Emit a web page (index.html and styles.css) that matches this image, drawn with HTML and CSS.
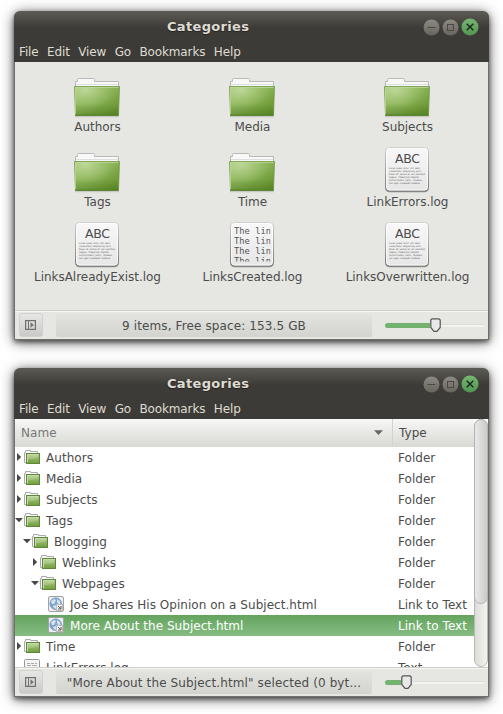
FILE: index.html
```html
<!DOCTYPE html>
<html lang="en">
<head>
<meta charset="utf-8">
<title>Categories</title>
<link rel="stylesheet" href="styles.css">
</head>
<body>
<svg class="defs" width="0" height="0" aria-hidden="true">
  <defs>
    <linearGradient id="green" x1="0" y1="0" x2="1" y2="1"><stop offset="0" stop-color="#a3c76e"/><stop offset=".5" stop-color="#88b155"/><stop offset=".75" stop-color="#749f3c"/><stop offset="1" stop-color="#618c2c"/></linearGradient>
    <radialGradient id="shine" cx=".25" cy=".12" r=".65"><stop offset="0" stop-color="#c9dfa9" stop-opacity=".75"/><stop offset="1" stop-color="#b5d18c" stop-opacity="0"/></radialGradient>
    <linearGradient id="shade" x1="0" y1="0" x2="0" y2="1"><stop offset=".6" stop-color="#3f6a15" stop-opacity="0"/><stop offset="1" stop-color="#3f6a15" stop-opacity=".35"/></linearGradient>
    <linearGradient id="mini" x1="0" y1="0" x2="0" y2="1"><stop offset="0" stop-color="#b2cf8d"/><stop offset="1" stop-color="#709c3c"/></linearGradient>
    <linearGradient id="paper" x1="0" y1="0" x2="0" y2="1"><stop offset="0" stop-color="#f8f8f8"/><stop offset="1" stop-color="#e6e6e6"/></linearGradient>
    <linearGradient id="edge" x1="0" y1="0" x2="0" y2="1"><stop offset="0" stop-color="#cfcfcf"/><stop offset="1" stop-color="#777"/></linearGradient>
    <linearGradient id="grey" x1="0" y1="0" x2="0" y2="1"><stop offset="0" stop-color="#8c8a83"/><stop offset="1" stop-color="#66645d"/></linearGradient>
    <linearGradient id="closeg" x1="0" y1="0" x2="0" y2="1"><stop offset="0" stop-color="#78b573"/><stop offset="1" stop-color="#4f9650"/></linearGradient>
    <clipPath id="clip"><rect x="3" y="3" width="39.500" height="38.500"/></clipPath>
    <symbol id="folder" viewBox="0 0 48 48">
      <path d="M2 46.500h44" stroke="#000" stroke-opacity=".13" stroke-width="1.500"/>
      <path d="M2.500 18V11.500H4.500V9.500Q4.500 8.500 5.500 8.500H20.500Q21.500 8.500 21.500 9.500V11.500H45.500V18" fill="#f8f8f8" stroke="#b9b9b9"/>
      <path d="M3 14.500H45" stroke="#dedede"/>
      <path d="M1.500 16.500H46.500L45.500 45.300H2.500Z" fill="url(#green)"/>
      <path d="M1.500 16.500H46.500L45.500 45.300H2.500Z" fill="url(#shine)"/>
      <path d="M1.500 16.500H46.500L45.500 45.300H2.500Z" fill="url(#shade)" stroke="#6f9843" stroke-width=".8"/>
      <path d="M2.500 44V17.500H45.500" fill="none" stroke="#c2daa0" stroke-opacity=".7"/>
      <path d="M2.300 45.200H45.700" stroke="#4d7a20"/>
    </symbol>
    <symbol id="sheet" viewBox="0 0 48 48">
      <rect x="2" y="3.300" width="44" height="44" rx="4.500" fill="#555" opacity=".6"/>
      <rect x="2.500" y="2.500" width="43" height="43.500" rx="4" fill="url(#paper)" stroke="url(#edge)"/>
      <rect x="3.500" y="3.500" width="41" height="41.500" rx="3" fill="none" stroke="#fff" stroke-opacity=".7"/>
    </symbol>
    <symbol id="abc" viewBox="0 0 48 48">
      <use href="#sheet"/>
      <text x="12" y="17.800" class="abc" textLength="25">ABC</text>
      <g class="lorem">
        <text x="6" y="24" textLength="32">Lorem ipsum dolor sit amet,</text>
        <text x="6" y="27" textLength="33">consectetur adipiscing elit.</text>
        <text x="6" y="30" textLength="36">Donec at varius et vel eleifend</text>
        <text x="6" y="33" textLength="30">tempus. Phasellus blandit</text>
        <text x="6" y="36" textLength="34">sollicitudin justo. Vivamus,</text>
        <text x="6" y="39" textLength="32">non eget consequat sodales.</text>
      </g>
    </symbol>
    <symbol id="lines" viewBox="0 0 48 48">
      <use href="#sheet"/>
      <g class="mono" clip-path="url(#clip)">
        <text x="6" y="14">The link</text><text x="6" y="24">The link</text><text x="6" y="34">The link</text><text x="6" y="44">The link</text>
      </g>
    </symbol>
    <symbol id="dir" viewBox="0 0 16 16">
      <path d="M.5 13.500V3.500H1.500V1.500H6.500V2.500H13.500V5" fill="#fafafa" stroke="#aaa"/>
      <path d="M.5 13.500H3" stroke="#aaa"/>
      <rect x="2.500" y="4.500" width="13" height="10" fill="url(#mini)" stroke="#5f873a"/>
      <path d="M3.500 13.500V5.500H14.500" fill="none" stroke="#c5dba8"/>
      <path d="M4 6H14V8Q10 10.500 4 10Z" fill="#fff" opacity=".18"/>
    </symbol>
    <symbol id="web" viewBox="0 0 16 16">
      <rect x=".5" y=".5" width="15" height="15" rx="1.500" fill="#efefef" stroke="#a3a3a3"/>
      <circle cx="7.700" cy="7.700" r="5.800" fill="#7fa6cf" stroke="#6a92bd" stroke-width=".8"/>
      <path d="M3 5L6 3L8 4L6 8L4 8ZM9 3L12 5L12.500 9L10 8L9 6ZM5 10L8 9L8 13L6 12Z" fill="#d5e3f1"/>
      <rect x="8.500" y="8.500" width="6" height="6" fill="#f5f5f5" stroke="#bbb"/>
      <path d="M10 10L12.500 12.500M13 10V13H10" fill="none" stroke="#555"/>
    </symbol>
    <symbol id="doc" viewBox="0 0 16 16">
      <rect x=".5" y=".5" width="15" height="15" rx="1" fill="#f4f4f4" stroke="#999"/>
      <path d="M3 4.500H6M7 4.500H10M11 4.500H13M3 6.500H7M8 6.500H13M3 8.500H12" stroke="#aaa"/>
    </symbol>
    <symbol id="right" viewBox="0 0 8 8"><path d="M2 0L6.200 4L2 8Z" fill="#484848"/></symbol>
    <symbol id="down" viewBox="0 0 8 8"><path d="M0 2H8L4 6.200Z" fill="#484848"/></symbol>
    <symbol id="controls" viewBox="0 0 56 18">
      <circle cx="8.500" cy="9.500" r="8" fill="url(#grey)"/><path d="M4.700 9.500H12.300" stroke="#494842"/>
      <circle cx="27.500" cy="9.500" r="8" fill="url(#grey)"/><rect x="24.500" y="6.500" width="6" height="6" fill="none" stroke="#494842"/>
      <circle cx="47" cy="9" r="8.500" fill="url(#closeg)"/><path d="M43.700 5.700L50.300 12.300M50.300 5.700L43.700 12.300" stroke="#18251a" stroke-width="1.400"/>
    </symbol>
    <symbol id="pane" viewBox="0 0 11 10">
      <rect x=".6" y=".6" width="9.800" height="8.800" fill="none" stroke="#707070" stroke-width="1.200"/>
      <path d="M3.500 1V9" stroke="#707070"/><path d="M5.500 2.300L8.800 5L5.500 7.700Z" fill="#707070"/>
    </symbol>
    <symbol id="knob" viewBox="0 0 11 15"><path d="M2 .8H9L10.200 2V9.500L7 13.300H4L.8 9.500V2Z" fill="#e9e9ea" stroke="#555" stroke-width="1.200"/></symbol>
  </defs>
</svg>

<main class="desktop">
  <section class="window icons-window">
    <header class="chrome">
      <div class="titlebar"><h1>Categories</h1><svg class="controls"><use href="#controls"/></svg></div>
      <nav class="menu"><span>File</span><span>Edit</span><span>View</span><span>Go</span><span>Bookmarks</span><span>Help</span></nav>
    </header>
    <div class="icon-view">
      <figure><svg><use href="#folder"/></svg><figcaption>Authors</figcaption></figure>
      <figure><svg><use href="#folder"/></svg><figcaption>Media</figcaption></figure>
      <figure><svg><use href="#folder"/></svg><figcaption>Subjects</figcaption></figure>
      <figure><svg><use href="#folder"/></svg><figcaption>Tags</figcaption></figure>
      <figure><svg><use href="#folder"/></svg><figcaption>Time</figcaption></figure>
      <figure><svg><use href="#abc"/></svg><figcaption>LinkErrors.log</figcaption></figure>
      <figure><svg><use href="#abc"/></svg><figcaption>LinksAlreadyExist.log</figcaption></figure>
      <figure><svg><use href="#lines"/></svg><figcaption>LinksCreated.log</figcaption></figure>
      <figure><svg><use href="#abc"/></svg><figcaption>LinksOverwritten.log</figcaption></figure>
    </div>
    <footer class="statusbar">
      <button class="toggle" aria-label="Sidebar"><svg><use href="#pane"/></svg></button>
      <div class="status">9 items, Free space: 153.5 GB</div>
      <div class="slider"><div class="fill fill-half"></div><svg class="knob"><use href="#knob"/></svg><div class="rest"></div></div>
    </footer>
  </section>

  <section class="window">
    <header class="chrome">
      <div class="titlebar"><h1>Categories</h1><svg class="controls"><use href="#controls"/></svg></div>
      <nav class="menu"><span>File</span><span>Edit</span><span>View</span><span>Go</span><span>Bookmarks</span><span>Help</span></nav>
    </header>
    <div class="list-view">
      <div class="list">
        <div class="row head"><div class="name">Name<svg class="sort"><use href="#down"/></svg></div><div class="type">Type</div></div>
        <div class="row"><div class="name"><svg class="arrow"><use href="#right"/></svg><svg class="ico"><use href="#dir"/></svg>Authors</div><div class="type">Folder</div></div>
        <div class="row"><div class="name"><svg class="arrow"><use href="#right"/></svg><svg class="ico"><use href="#dir"/></svg>Media</div><div class="type">Folder</div></div>
        <div class="row"><div class="name"><svg class="arrow"><use href="#right"/></svg><svg class="ico"><use href="#dir"/></svg>Subjects</div><div class="type">Folder</div></div>
        <div class="row"><div class="name"><svg class="arrow"><use href="#down"/></svg><svg class="ico"><use href="#dir"/></svg>Tags</div><div class="type">Folder</div></div>
        <div class="row level-1"><div class="name"><svg class="arrow"><use href="#down"/></svg><svg class="ico"><use href="#dir"/></svg>Blogging</div><div class="type">Folder</div></div>
        <div class="row level-2"><div class="name"><svg class="arrow"><use href="#right"/></svg><svg class="ico"><use href="#dir"/></svg>Weblinks</div><div class="type">Folder</div></div>
        <div class="row level-2"><div class="name"><svg class="arrow"><use href="#down"/></svg><svg class="ico"><use href="#dir"/></svg>Webpages</div><div class="type">Folder</div></div>
        <div class="row level-3"><div class="name"><svg class="arrow"></svg><svg class="ico"><use href="#web"/></svg>Joe Shares His Opinion on a Subject.html</div><div class="type">Link to Text</div></div>
        <div class="row level-3 selected"><div class="name"><svg class="arrow"></svg><svg class="ico"><use href="#web"/></svg>More About the Subject.html</div><div class="type">Link to Text</div></div>
        <div class="row"><div class="name"><svg class="arrow"><use href="#right"/></svg><svg class="ico"><use href="#dir"/></svg>Time</div><div class="type">Folder</div></div>
        <div class="row"><div class="name"><svg class="arrow"></svg><svg class="ico"><use href="#doc"/></svg>LinkErrors.log</div><div class="type">Text</div></div>
      </div>
      <div class="scrollbar"><div class="thumb"></div></div>
    </div>
    <footer class="statusbar">
      <button class="toggle" aria-label="Sidebar"><svg><use href="#pane"/></svg></button>
      <div class="status">"More About the Subject.html" selected (0 byt...</div>
      <div class="slider"><div class="fill fill-low"></div><svg class="knob"><use href="#knob"/></svg><div class="rest"></div></div>
    </footer>
  </section>
</main>
</body>
</html>
```
FILE: styles.css
```css
* { box-sizing: border-box; }
body {
  margin: 0;
  width: 503px;
  height: 714px;
  overflow: hidden;
  background: #fff;
  color: #4c4c4c;
  font: 12px/15px "DejaVu Sans", sans-serif;
  white-space: nowrap;
}
svg { display: block; flex: none; }
.defs { position: absolute; }
.desktop {
  display: flex;
  flex-direction: column;
  gap: 28px;
  padding: 11px 14px 0;
}
.window {
  width: 475px;
  height: 329px;
  display: flex;
  flex-direction: column;
  border: 1px solid #6f706a;
  border-top: 0;
  border-radius: 7px 7px 0 0;
  box-shadow: 0 2px 5px rgba(0, 0, 0, .55), 0 2px 14px rgba(0, 0, 0, .6);
}
.chrome {
  height: 51px;
  flex: none;
  margin: 0 -1px;
  padding: 0 1px;
  border-radius: 6px 6px 0 0;
  background: linear-gradient(#5c5b55, #3c3b37 17px);
  color: #dfdbd2;
}
.titlebar {
  height: 31px;
  display: grid;
  grid-template-columns: 1fr auto;
  padding: 7px 9px 0 0;
}
h1 {
  margin: 0;
  padding: 0 0 0 152px;
  font-size: 13px;
  line-height: 17px;
  letter-spacing: .33px;
  text-shadow: 0 1px 1px #222;
}
.controls { width: 56px; height: 18px; }
.menu { display: flex; gap: 8.500px; padding: 3px 4px 0; letter-spacing: -.14px; }
.icon-view {
  flex: 1;
  display: grid;
  grid-template-columns: repeat(3, 155px);
  grid-auto-rows: 75px;
  padding: 8px 0 0 5px;
  background: #e6e7e2;
}
figure {
  margin: 0;
  display: flex;
  flex-direction: column;
  align-items: center;
}
figure svg { width: 48px; height: 48px; margin-right: 1px; }
figcaption { padding-top: 2px; letter-spacing: -.03px; }
.abc { font: 12.500px "DejaVu Sans", sans-serif; fill: #4c4c4c; }
.lorem { font: 2.300px "DejaVu Sans Mono", monospace; fill: #666; }
.mono { font: 8.800px "DejaVu Sans Mono", monospace; fill: #555; }
.statusbar {
  height: 29px;
  flex: none;
  display: flex;
  padding: 2px 4px 1px;
  border-top: 1px solid #cdcec9;
  background: #e6e7e2;
  box-shadow: inset 0 1px #f5f5f3;
}
.toggle {
  width: 24px;
  height: 24px;
  display: grid;
  place-items: center;
  padding: 0 1px 0 0;
  border: 1px solid #d1d1cf;
  border-radius: 3px;
  background: linear-gradient(#e7e7e6, #cacac9);
}
.toggle svg { width: 11px; height: 10px; }
.status {
  width: 316px;
  height: 23px;
  margin: 1px 13px 0;
  padding-top: 1px;
  border-radius: 2px;
  background: linear-gradient(#e2e3de, #d3d4cf);
  text-align: center;
  line-height: 23px;
  letter-spacing: .12px;
}
.slider {
  width: 99px;
  display: flex;
  align-items: center;
  height: 23px;
  padding-top: 1px;
  flex: none;
}
.fill { height: 5px; border-radius: 3px 0 0 3px; background: #74b270; }
.fill-half { width: 45px; }
.fill-low { width: 16px; }
.knob { width: 11px; height: 15px; }
.rest { flex: 1; height: 3px; border-top: 1px solid #dbdcd7; background: #f3f3f1; }
.list-view {
  flex: 1;
  min-height: 0;
  display: flex;
  overflow: hidden;
  background: #fff;
}
.list { width: 459px; overflow: hidden; }
.row {
  height: 21px;
  display: grid;
  grid-template-columns: 378px 81px;
  letter-spacing: .04px;
}
.name, .type { display: flex; align-items: center; padding-top: 2px; }
.type { padding-left: 5px; }
.head { height: 28px; background: linear-gradient(#f7f7f6, #d8d9d4); }
.head .name { padding: 0 9px 0 6px; color: #777; border-right: 1px solid #d2d3ce; }
.head .type { padding: 0 0 0 6px; }
.sort { width: 9px; height: 9px; margin: 0 0 1px auto; opacity: .8; }
.arrow { width: 8px; height: 8px; margin: 0 1px 3px 0; }
.ico { width: 16px; height: 16px; margin: 0 6px 3px 0; }
.level-1 .name { padding-left: 8px; }
.level-2 .name { padding-left: 16px; }
.level-3 .name { padding-left: 24px; }
.selected { background: linear-gradient(#64a35e, #86bd83); color: #fff; }
.scrollbar {
  width: 14px;
  border: 1px solid #b8b9b5;
  border-radius: 7px;
  background: linear-gradient(90deg, #dcddd9, #f3f3f1);
}
.thumb {
  height: 185px;
  margin: -1px;
  border: 1px solid #b3b3b1;
  border-radius: 7px;
  background: linear-gradient(90deg, #e9e9e9, #cbcbca);
}
```
